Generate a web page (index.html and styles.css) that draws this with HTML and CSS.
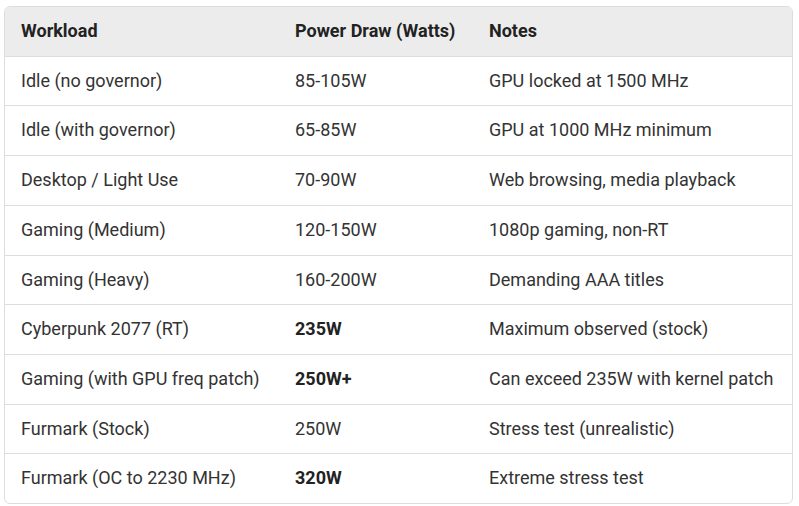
FILE: index.html
```html
<!DOCTYPE html>
<html>
<head>
<meta charset="utf-8">
<link rel="stylesheet" href="styles.css">
</head>
<body>
<div class="wrap">
<table class="power">
<colgroup><col class="c1"><col class="c2"><col></colgroup>
<thead>
<tr><th>Workload</th><th>Power Draw (Watts)</th><th>Notes</th></tr>
</thead>
<tbody>
<tr><td>Idle (no governor)</td><td>85-105W</td><td>GPU locked at 1500 MHz</td></tr>
<tr><td>Idle (with governor)</td><td>65-85W</td><td>GPU at 1000 MHz minimum</td></tr>
<tr><td>Desktop / Light Use</td><td>70-90W</td><td>Web browsing, media playback</td></tr>
<tr><td>Gaming (Medium)</td><td>120-150W</td><td>1080p gaming, non-RT</td></tr>
<tr><td>Gaming (Heavy)</td><td>160-200W</td><td>Demanding AAA titles</td></tr>
<tr><td>Cyberpunk 2077 (RT)</td><td><strong>235W</strong></td><td>Maximum observed (stock)</td></tr>
<tr><td>Gaming (with GPU freq patch)</td><td><strong>250W+</strong></td><td>Can exceed 235W with kernel patch</td></tr>
<tr><td>Furmark (Stock)</td><td>250W</td><td>Stress test (unrealistic)</td></tr>
<tr class="last"><td>Furmark (OC to 2230 MHz)</td><td><strong>320W</strong></td><td>Extreme stress test</td></tr>
</tbody>
</table>
</div>
</body>
</html>
```

FILE: styles.css
```css
html, body {
  margin: 0;
  background: #ffffff;
}
body {
  padding: 6px 6px 0 4px;
  font-family: Roboto, "Liberation Sans", sans-serif;
  font-size: 18px;
  color: #333333;
}
.wrap {
  border: 1px solid #dddddd;
  border-radius: 6px;
  overflow: hidden;
}
.power {
  width: 100%;
  border-collapse: collapse;
  table-layout: fixed;
}
.c1 { width: 274px; }
.c2 { width: 194px; }
.power th, .power td {
  text-align: left;
  padding: 14px 16px;
  line-height: 20.7px;
  white-space: nowrap;
}
.power th {
  background: #ececec;
  font-weight: 700;
  color: #222222;
  border-bottom: 1px solid #dddddd;
}
.power td {
  border-bottom: 1px solid #dddddd;
}
.power tr.last td {
  border-bottom: none;
}
.power strong {
  font-weight: 700;
  color: #222222;
}
```
